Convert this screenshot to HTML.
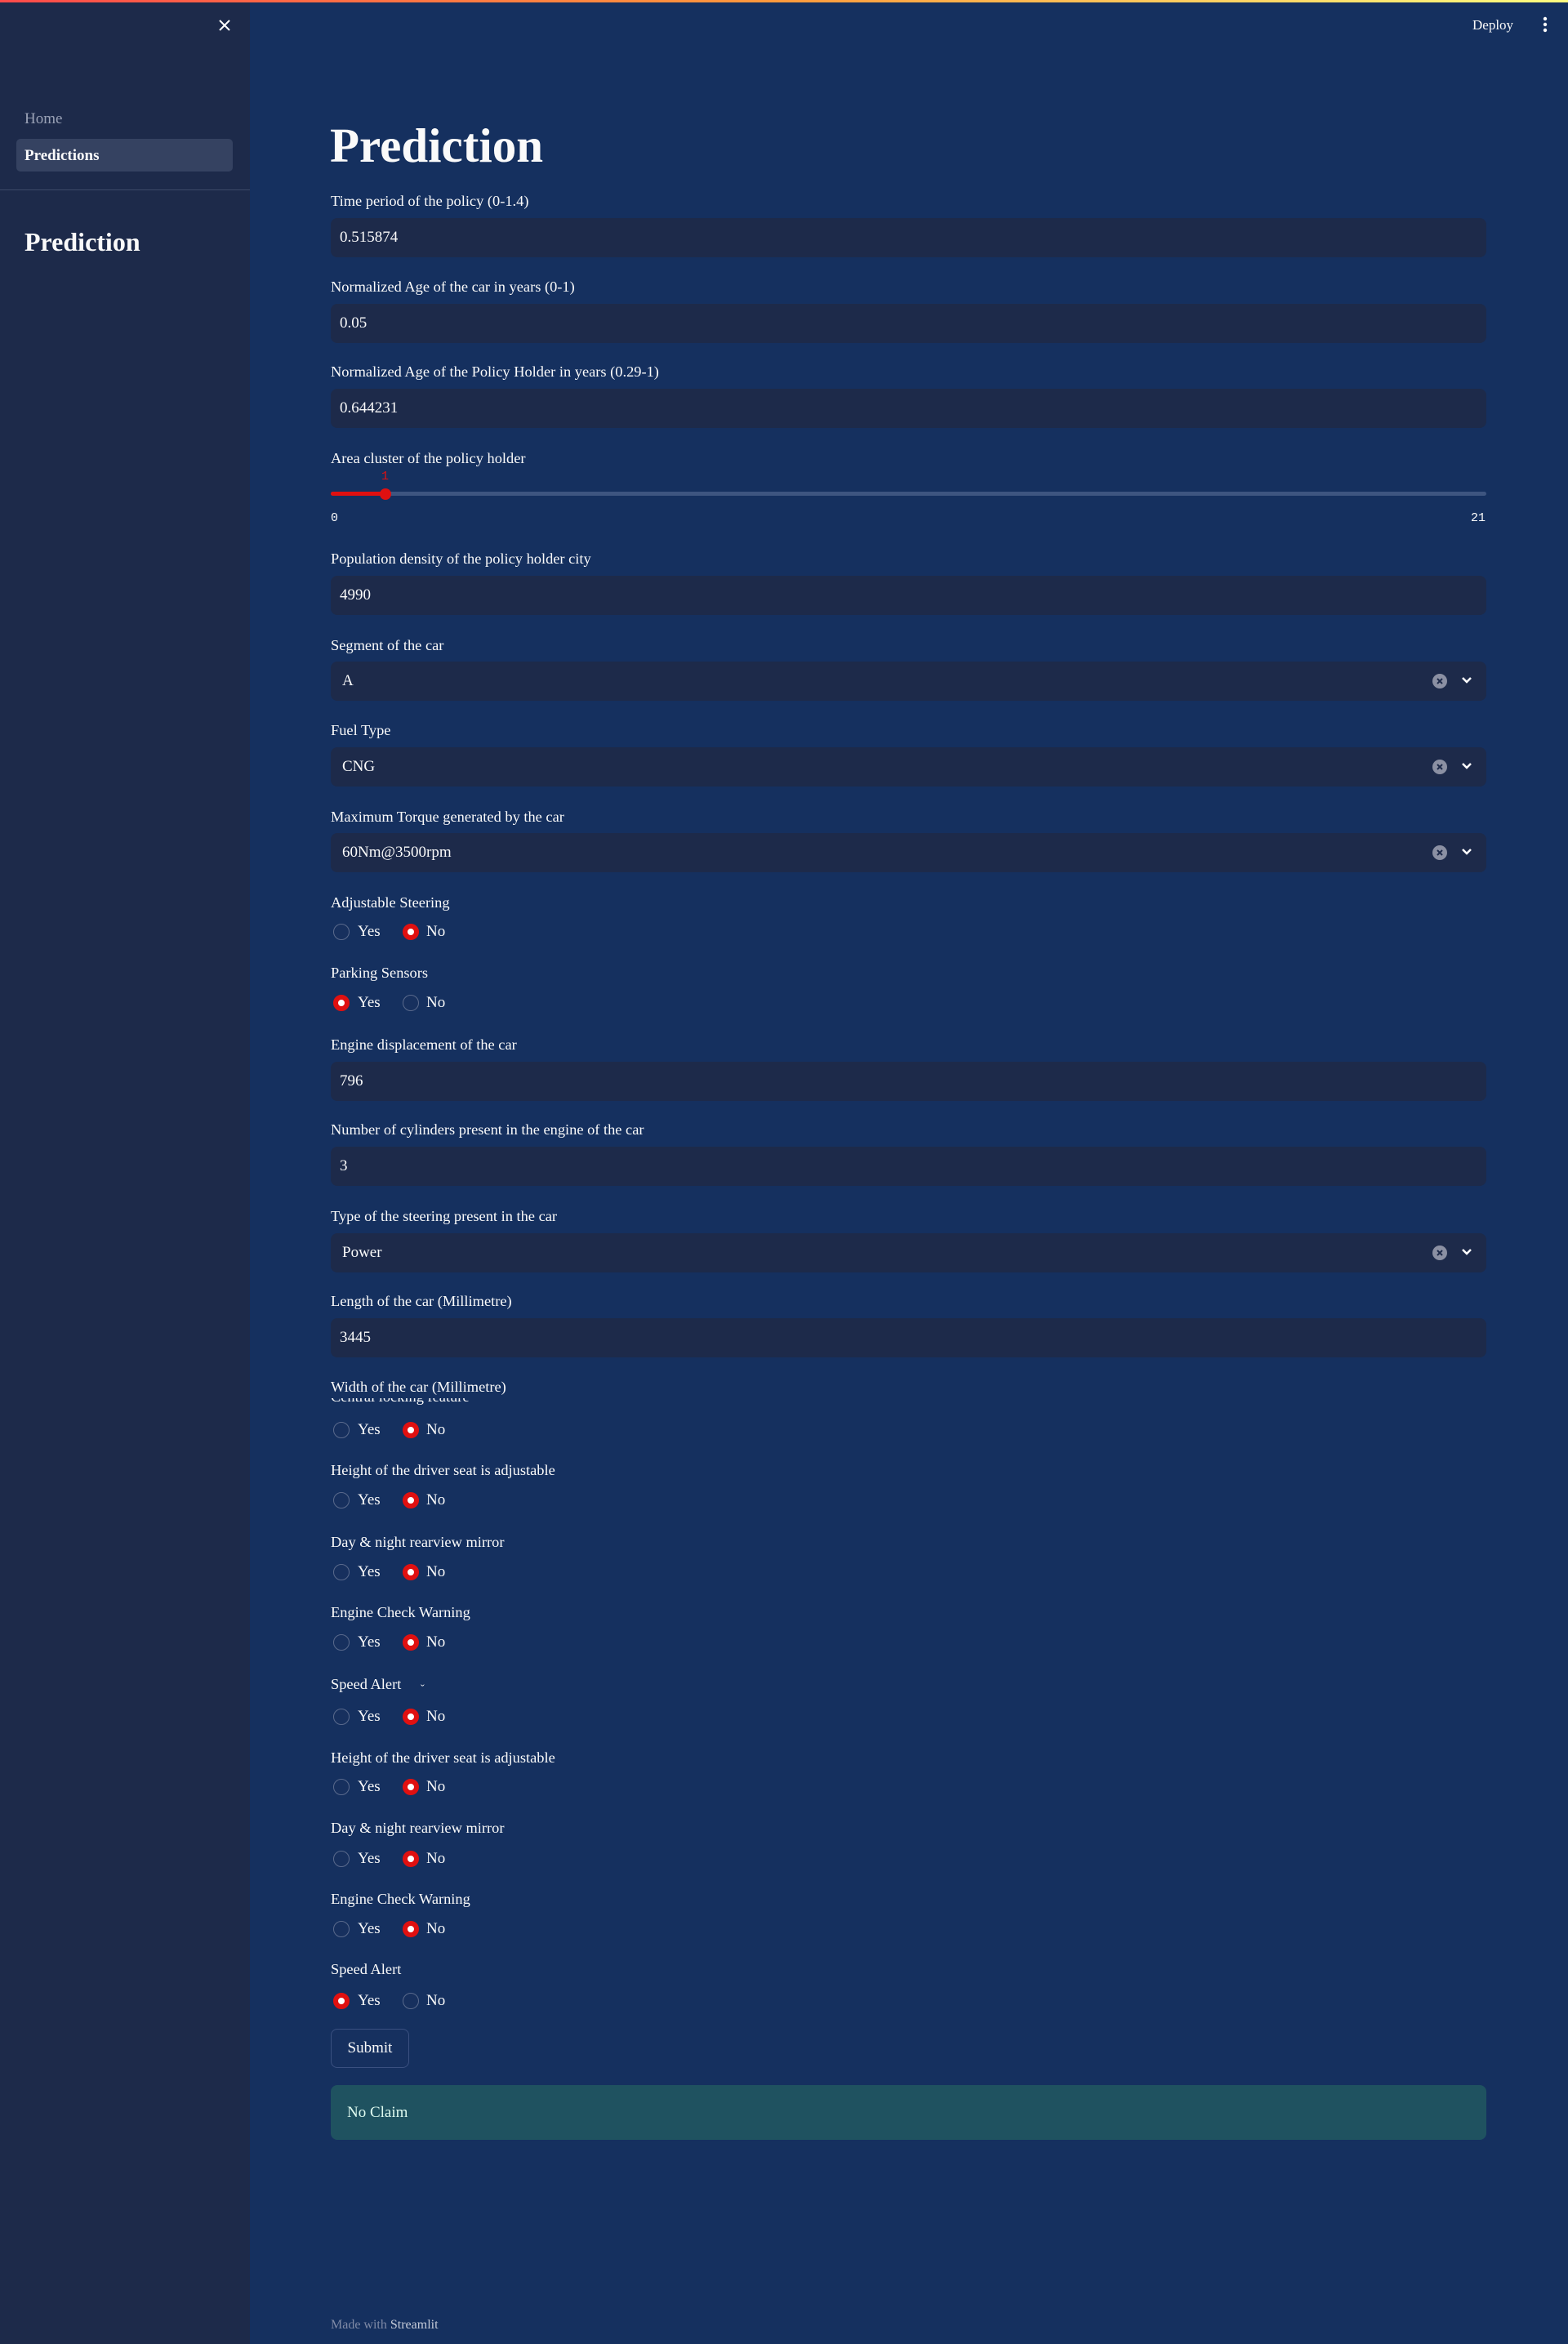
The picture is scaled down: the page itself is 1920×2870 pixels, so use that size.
<!DOCTYPE html>
<html><head><meta charset="utf-8"><style>
*{margin:0;padding:0;box-sizing:border-box}
body{width:1920px;height:2870px;background:#15305f;font-family:"Liberation Serif",serif;color:#fafafa;position:relative;overflow:hidden}
.a{position:absolute}
#top{left:0;top:0;width:1920px;height:3px;background:linear-gradient(90deg,#ff4b4b,#ff9a3c 50%,#fffd80)}
#side{left:0;top:3px;width:306px;height:2867px;background:#1d2a4a}
.lbl{position:absolute;left:405px;font-size:18.4px;height:28px;line-height:28px;white-space:nowrap}
.inp{position:absolute;left:405px;width:1415px;height:48px;background:#1d2a4a;border-radius:8px;font-size:19px;line-height:48px;padding-left:11px}
.sel{padding-left:14px}
.clr{position:absolute;right:48px;top:15px;width:18px;height:18px;border-radius:50%;background:#8b90a3}
.chev{position:absolute;right:16px;top:14px}
.rad{position:absolute;left:405px;height:28px;font-size:19px;line-height:28px;width:200px}
.c{position:absolute;top:4px;width:20px;height:20px;border-radius:50%;border:1.5px solid #5a6a8c;background:#17305e}
.c.on{border:6px solid #e01010;background:#fff}
.rt{position:absolute}
</style></head><body>
<div class="a" id="top"></div>
<div class="a" id="side"></div>
<svg class="a" style="left:266px;top:22px" width="18" height="18" viewBox="0 0 18 18"><path d="M3 3L15 15M15 3L3 15" stroke="#fff" stroke-width="2"/></svg>
<div class="a" style="left:30px;top:132px;font-size:19px;color:#9aa2b6;line-height:28px">Home</div>
<div class="a" style="left:20px;top:170px;width:265px;height:40px;background:#354261;border-radius:5px"></div>
<div class="a" style="left:30px;top:177px;font-size:19px;font-weight:bold;line-height:28px">Predictions</div>
<div class="a" style="left:0;top:232px;width:306px;height:1px;background:#3d4a68"></div>
<div class="a" style="left:30px;top:276px;font-size:32px;font-weight:bold;line-height:40px">Prediction</div>

<div class="a" style="left:1803px;top:18px;font-size:17px;line-height:26px">Deploy</div>
<svg class="a" style="left:1888px;top:20px" width="8" height="22"><circle cx="4" cy="3" r="2.2" fill="#fff"/><circle cx="4" cy="10" r="2.2" fill="#fff"/><circle cx="4" cy="17" r="2.2" fill="#fff"/></svg>

<div class="a" style="left:404px;top:143px;font-size:59px;font-weight:bold;line-height:70px">Prediction</div>

<div class="lbl" style="top:232px">Time period of the policy (0-1.4)</div>
<div class="inp" style="top:267px">0.515874</div>
<div class="lbl" style="top:337px">Normalized Age of the car in years (0-1)</div>
<div class="inp" style="top:372px">0.05</div>
<div class="lbl" style="top:441px">Normalized Age of the Policy Holder in years (0.29-1)</div>
<div class="inp" style="top:476px">0.644231</div>
<div class="lbl" style="top:547px">Area cluster of the policy holder</div>
<div class="a" style="left:467px;top:575px;font-size:15px;color:#e01010;font-family:'Liberation Mono',monospace">1</div>
<div class="a" style="left:405px;top:602px;width:1415px;height:5px;border-radius:3px;background:#3e5580"></div>
<div class="a" style="left:405px;top:602px;width:67px;height:5px;border-radius:3px;background:#e01010"></div>
<div class="a" style="left:465px;top:598px;width:14px;height:14px;border-radius:50%;background:#e01010"></div>
<div class="a" style="left:405px;top:626px;font-size:15px;font-family:'Liberation Mono',monospace">0</div>
<div class="a" style="left:1801px;top:626px;font-size:15px;font-family:'Liberation Mono',monospace">21</div>

<div class="lbl" style="top:670px">Population density of the policy holder city</div>
<div class="inp" style="top:705px">4990</div>
<div class="lbl" style="top:776px">Segment of the car</div>
<div class="inp sel" style="top:810px">A<span class="clr"><svg width="18" height="18" style="position:absolute;left:0;top:0"><path d="M6 6L12 12M12 6L6 12" stroke="#1d2a4a" stroke-width="2"/></svg></span><svg class="chev" width="16" height="16"><path d="M3 6L8 11L13 6" stroke="#fff" stroke-width="2.5" fill="none"/></svg></div>
<div class="lbl" style="top:880px">Fuel Type</div>
<div class="inp sel" style="top:915px">CNG<span class="clr"><svg width="18" height="18" style="position:absolute;left:0;top:0"><path d="M6 6L12 12M12 6L6 12" stroke="#1d2a4a" stroke-width="2"/></svg></span><svg class="chev" width="16" height="16"><path d="M3 6L8 11L13 6" stroke="#fff" stroke-width="2.5" fill="none"/></svg></div>
<div class="lbl" style="top:986px">Maximum Torque generated by the car</div>
<div class="inp sel" style="top:1020px">60Nm@3500rpm<span class="clr"><svg width="18" height="18" style="position:absolute;left:0;top:0"><path d="M6 6L12 12M12 6L6 12" stroke="#1d2a4a" stroke-width="2"/></svg></span><svg class="chev" width="16" height="16"><path d="M3 6L8 11L13 6" stroke="#fff" stroke-width="2.5" fill="none"/></svg></div>

<div class="lbl" style="top:1091px">Adjustable Steering</div>
<div class="rad" style="top:1127px"><span class="c" style="left:3px"></span><span class="rt" style="left:33px">Yes</span><span class="c on" style="left:88px"></span><span class="rt" style="left:117px">No</span></div>
<div class="lbl" style="top:1177px">Parking Sensors</div>
<div class="rad" style="top:1214px"><span class="c on" style="left:3px"></span><span class="rt" style="left:33px">Yes</span><span class="c" style="left:88px"></span><span class="rt" style="left:117px">No</span></div>

<div class="lbl" style="top:1265px">Engine displacement of the car</div>
<div class="inp" style="top:1300px">796</div>
<div class="lbl" style="top:1369px">Number of cylinders present in the engine of the car</div>
<div class="inp" style="top:1404px">3</div>
<div class="lbl" style="top:1475px">Type of the steering present in the car</div>
<div class="inp sel" style="top:1510px">Power<span class="clr"><svg width="18" height="18" style="position:absolute;left:0;top:0"><path d="M6 6L12 12M12 6L6 12" stroke="#1d2a4a" stroke-width="2"/></svg></span><svg class="chev" width="16" height="16"><path d="M3 6L8 11L13 6" stroke="#fff" stroke-width="2.5" fill="none"/></svg></div>
<div class="lbl" style="top:1579px">Length of the car (Millimetre)</div>
<div class="inp" style="top:1614px">3445</div>
<div class="lbl" style="top:1684px">Width of the car (Millimetre)</div>
<div class="a" style="left:405px;top:1712px;width:300px;height:12px;overflow:hidden"><div style="position:absolute;left:0;top:-16px;font-size:18.4px;line-height:28px;white-space:nowrap">Central locking feature</div></div>
<div class="rad" style="top:1737px"><span class="c" style="left:3px"></span><span class="rt" style="left:33px">Yes</span><span class="c on" style="left:88px"></span><span class="rt" style="left:117px">No</span></div>

<div class="lbl" style="top:1786px">Height of the driver seat is adjustable</div>
<div class="rad" style="top:1823px"><span class="c" style="left:3px"></span><span class="rt" style="left:33px">Yes</span><span class="c on" style="left:88px"></span><span class="rt" style="left:117px">No</span></div>
<div class="lbl" style="top:1874px">Day &amp; night rearview mirror</div>
<div class="rad" style="top:1911px"><span class="c" style="left:3px"></span><span class="rt" style="left:33px">Yes</span><span class="c on" style="left:88px"></span><span class="rt" style="left:117px">No</span></div>
<div class="lbl" style="top:1960px">Engine Check Warning</div>
<div class="rad" style="top:1997px"><span class="c" style="left:3px"></span><span class="rt" style="left:33px">Yes</span><span class="c on" style="left:88px"></span><span class="rt" style="left:117px">No</span></div>
<div class="lbl" style="top:2048px">Speed Alert</div>
<div class="a" style="left:515px;top:2061px;font-size:14px;line-height:16px">ˇ</div>
<div class="rad" style="top:2088px"><span class="c" style="left:3px"></span><span class="rt" style="left:33px">Yes</span><span class="c on" style="left:88px"></span><span class="rt" style="left:117px">No</span></div>

<div class="lbl" style="top:2138px">Height of the driver seat is adjustable</div>
<div class="rad" style="top:2174px"><span class="c" style="left:3px"></span><span class="rt" style="left:33px">Yes</span><span class="c on" style="left:88px"></span><span class="rt" style="left:117px">No</span></div>
<div class="lbl" style="top:2224px">Day &amp; night rearview mirror</div>
<div class="rad" style="top:2262px"><span class="c" style="left:3px"></span><span class="rt" style="left:33px">Yes</span><span class="c on" style="left:88px"></span><span class="rt" style="left:117px">No</span></div>
<div class="lbl" style="top:2311px">Engine Check Warning</div>
<div class="rad" style="top:2348px"><span class="c" style="left:3px"></span><span class="rt" style="left:33px">Yes</span><span class="c on" style="left:88px"></span><span class="rt" style="left:117px">No</span></div>
<div class="lbl" style="top:2397px">Speed Alert</div>
<div class="rad" style="top:2436px"><span class="c on" style="left:3px"></span><span class="rt" style="left:33px">Yes</span><span class="c" style="left:88px"></span><span class="rt" style="left:117px">No</span></div>

<div class="a" style="left:405px;top:2484px;width:96px;height:48px;border:1px solid #3a5080;border-radius:8px;background:#16305f;font-size:19px;line-height:46px;text-align:center">Submit</div>
<div class="a" style="left:405px;top:2553px;width:1415px;height:67px;background:#1f5260;border-radius:8px;font-size:19px;line-height:67px;padding-left:20px;color:#dffbf0">No Claim</div>
<div class="a" style="left:405px;top:2835px;font-size:16px;line-height:24px;color:#7f8aa6">Made with <span style="color:#c5cbd8">Streamlit</span></div>
</body></html>
